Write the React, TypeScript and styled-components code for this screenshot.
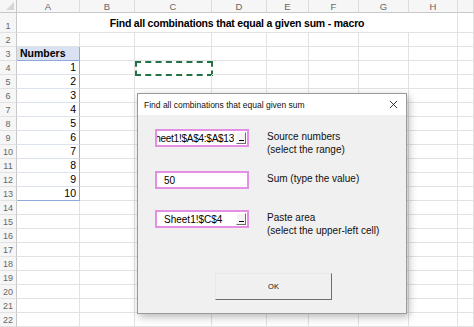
import styled, { createGlobalStyle } from "styled-components";

const GlobalStyle = createGlobalStyle`
  html, body {
    margin: 0;
    padding: 0;
    background: #ffffff;
    font-family: "Liberation Sans", Arial, sans-serif;
  }
`;

const Screen = styled.div`
  position: relative;
  width: 474px;
  height: 327px;
  overflow: hidden;
  background: #ffffff;
`;

const Sheet = styled.div`
  display: grid;
  grid-template-columns: 17px 63px 55px 77px 55px 42px 50px 50px 49px 1fr;
  grid-template-rows: 13px 20px repeat(21, 14px);
`;

const Corner = styled.div`
  background: #f6f6f6;
  border-right: 1px solid #c8c8c8;
  border-bottom: 1px solid #c8c8c8;
  position: relative;
  &::after {
    content: "";
    position: absolute;
    right: 2px;
    bottom: 2px;
    border-left: 8px solid transparent;
    border-bottom: 8px solid #d6d6d6;
  }
`;

const ColHead = styled.div`
  background: #f6f6f6;
  border-right: 1px solid #dcdcdc;
  border-bottom: 1px solid #c8c8c8;
  color: #666666;
  font-size: 9.5px;
  display: flex;
  align-items: center;
  justify-content: center;
`;

const RowHead = styled.div`
  background: #f6f6f6;
  border-right: 1px solid #c8c8c8;
  border-bottom: 1px solid #e2e2e2;
  color: #666666;
  font-size: 9px;
  display: flex;
  align-items: flex-end;
  justify-content: center;
  padding-bottom: 1px;
  box-sizing: border-box;
`;

const Cell = styled.div<{ $right?: boolean; $table?: "head" | "body" | "last"; $marquee?: boolean }>`
  box-sizing: border-box;
  border-right: 1px solid #e2e2e2;
  border-bottom: 1px solid #e2e2e2;
  font-size: 10.5px;
  color: #000;
  display: flex;
  align-items: flex-end;
  padding: 0 3px 1px;
  justify-content: ${(p) => (p.$right ? "flex-end" : "flex-start")};
  ${(p) =>
    p.$table &&
    `
    border-right: 1px solid #8ea9db;
  `}
  ${(p) =>
    p.$table === "head" &&
    `
    background: #d9e1f2;
    font-weight: bold;
    border-bottom: 1px solid #8ea9db;
  `}
  ${(p) =>
    p.$table === "body" &&
    `
    border-bottom: 1px solid #dce3ef;
  `}
  ${(p) =>
    p.$table === "last" &&
    `
    border-bottom: 1px solid #8ea9db;
  `}
  ${(p) =>
    p.$marquee &&
    `
    border: 2px dashed #217346;
    margin: 0 -1px -1px 0;
  `}
`;

const TitleCell = styled.div`
  grid-column: 2 / 10;
  border-right: 1px solid #e2e2e2;
  border-bottom: 1px solid #e2e2e2;
  display: flex;
  align-items: flex-end;
  justify-content: center;
  padding-bottom: 3px;
  box-sizing: border-box;
  font-size: 10.5px;
  font-weight: bold;
  letter-spacing: -0.2px;
  color: #000;
`;

const Dialog = styled.div`
  position: absolute;
  left: 137px;
  top: 93px;
  width: 270px;
  height: 221px;
  box-sizing: border-box;
  border: 1px solid #9a9a9a;
  background: #f0f0f0;
  box-shadow: 2px 3px 8px rgba(0, 0, 0, 0.28);
  display: flex;
  flex-direction: column;
  font-family: "Liberation Sans", Arial, sans-serif;
`;

const TitleBar = styled.div`
  height: 21px;
  flex: none;
  background: #ffffff;
  display: flex;
  align-items: center;
  justify-content: space-between;
  padding: 0 8px 0 6px;
  font-size: 8.5px;
  color: #111;
`;

const CloseIcon = styled.svg`
  width: 9px;
  height: 9px;
`;

const Body = styled.div`
  flex: 1;
  display: flex;
  flex-direction: column;
  padding: 14px 0 0 17px;
`;

const Field = styled.div<{ $gap: number }>`
  display: flex;
  align-items: flex-start;
  gap: 18px;
  margin-top: ${(p) => p.$gap}px;
`;

const TextBox = styled.div<{ $indent?: number }>`
  width: 94px;
  height: 18px;
  box-sizing: border-box;
  border: 2px solid #e48ee4;
  background: #fff;
  display: flex;
  align-items: center;
  padding-left: ${(p) => p.$indent ?? 0}px;
  flex: none;
  font-size: 10px;
  color: #000;
  overflow: hidden;
`;

const BoxText = styled.div<{ $scrolled?: boolean }>`
  flex: 1;
  min-width: 0;
  overflow: hidden;
  white-space: nowrap;
  display: flex;
  justify-content: ${(p) => (p.$scrolled ? "flex-end" : "flex-start")};
  letter-spacing: ${(p) => (p.$scrolled ? "-0.25px" : "0")};
`;

const RefButton = styled.div`
  width: 10px;
  height: 12px;
  margin: 0 1px 0 2px;
  flex: none;
  box-sizing: border-box;
  background: #f4f4f4;
  border-right: 1px solid #6d6d6d;
  border-bottom: 1px solid #6d6d6d;
  border-top: 1px solid #ffffff;
  border-left: 1px solid #ffffff;
  display: flex;
  align-items: flex-end;
  justify-content: center;
  padding-bottom: 2px;
  &::after {
    content: "";
    width: 5px;
    height: 1px;
    background: #000;
  }
`;

const Label = styled.div`
  font-size: 10px;
  line-height: 13px;
  color: #111;
  padding-top: 1px;
`;

const OkButton = styled.button`
  align-self: center;
  margin: 36px 0 0 -14px;
  width: 117px;
  height: 27px;
  box-sizing: border-box;
  background: #f0f0f0;
  border: 1px solid #e8e8e8;
  border-right: 1px solid #6d6d6d;
  border-bottom: 1px solid #6d6d6d;
  font-family: "Liberation Sans", Arial, sans-serif;
  font-size: 7.5px;
  color: #111;
  padding: 0;
`;

const columns = ["A", "B", "C", "D", "E", "F", "G", "H", ""];

function App() {
  const rows = Array.from({ length: 21 }, (_, i) => i + 2);
  return (
    <Screen>
      <GlobalStyle />
      <Sheet>
        <Corner />
        {columns.map((c, i) => (
          <ColHead key={i}>{c}</ColHead>
        ))}
        <RowHead>1</RowHead>
        <TitleCell>Find all combinations that equal a given sum - macro</TitleCell>
        <Cell />
        {rows.map((r) => {
          let first = <Cell />;
          if (r === 3) first = <Cell $table="head">Numbers</Cell>;
          else if (r >= 4 && r <= 13)
            first = (
              <Cell $right $table={r === 13 ? "last" : "body"}>
                {r - 3}
              </Cell>
            );
          return [
            <RowHead key={`h${r}`}>{r}</RowHead>,
            <div key={`a${r}`} style={{ display: "contents" }}>
              {first}
            </div>,
            ...Array.from({ length: 8 }, (_, c) => (
              <Cell key={`c${r}-${c}`} $marquee={r === 4 && c === 1} />
            )),
          ];
        })}
      </Sheet>

      <Dialog>
        <TitleBar>
          <span>Find all combinations that equal given sum</span>
          <CloseIcon viewBox="0 0 10 10">
            <path d="M1 1 L9 9 M9 1 L1 9" stroke="#222" strokeWidth="1" />
          </CloseIcon>
        </TitleBar>
        <Body>
          <Field $gap={0}>
            <TextBox>
              <BoxText $scrolled>Sheet1!$A$4:$A$13</BoxText>
              <RefButton />
            </TextBox>
            <Label>
              Source numbers
              <br />
              (select the range)
            </Label>
          </Field>
          <Field $gap={15}>
            <TextBox $indent={7}>
              <BoxText>50</BoxText>
            </TextBox>
            <Label>Sum (type the value)</Label>
          </Field>
          <Field $gap={21}>
            <TextBox $indent={7}>
              <BoxText>Sheet1!$C$4</BoxText>
              <RefButton />
            </TextBox>
            <Label>
              Paste area
              <br />
              (select the upper-left cell)
            </Label>
          </Field>
          <OkButton>OK</OkButton>
        </Body>
      </Dialog>
    </Screen>
  );
}

export default App;
